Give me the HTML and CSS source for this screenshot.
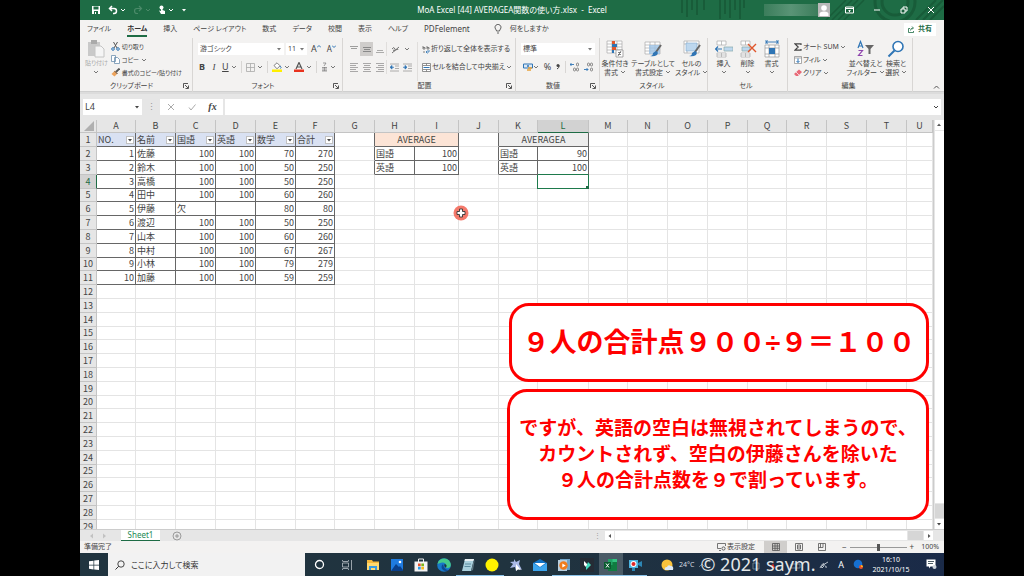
FILE: index.html
```html
<!DOCTYPE html>
<html lang="ja">
<head>
<meta charset="utf-8">
<meta name="viewport" content="width=device-width, initial-scale=1">
<title>MoA Excel [44] AVERAGEA関数の使い方.xlsx - Excel</title>
<link rel="stylesheet" href="styles.css">
</head>
<body>
<svg class="sprite" aria-hidden="true">
  <symbol id="chev" viewBox="0 0 6 6"><path d="M1 2l2 2 2-2" fill="none" stroke="currentColor" stroke-width="1"/></symbol>
  <symbol id="tri" viewBox="0 0 6 6"><path d="M1 2h4L3 4.500z" fill="currentColor"/></symbol>
  <symbol id="launch" viewBox="0 0 6 6"><path d="M.5 5V.5H5M2 2l3 3M5.500 2.500v3h-3" fill="none" stroke="currentColor" stroke-width=".9"/></symbol>
</svg>
<div class="app">
  <header class="titlebar">
    <svg class="deco" viewBox="0 0 264 20" preserveAspectRatio="xMaxYMin slice" aria-hidden="true">
      <g stroke="#185c39" stroke-width="2" fill="none">
        <path d="M2 0v13M7 0v17M12 0v10M17 0v15M24 0v10M40 0v19M45 0v14M50 0v18M55 0v10M60 0v19M64 0v8"/>
        <path d="M146 20l20-20M152 20l20-20M158 20l20-20M164 20l20-20" stroke-width="1.500"/>
        <circle cx="215" cy="2" r="13" stroke-width="3"/><circle cx="215" cy="2" r="20" stroke-width="3"/>
        <path d="M236 20l20-20M243 20l20-20M250 20l14-14"/>
      </g>
    </svg>
    <div class="quick">
      <button aria-label="上書き保存"><svg width="10" height="10" viewBox="0 0 10 10"><path d="M1 1h8v8H1z" fill="#fff"/><path d="M2.500 1.500h5v3h-5zM3 6h4v3H3z" fill="#1e6c45"/><path d="M4 7h1v2H4z" fill="#fff"/></svg></button>
      <button class="undo" aria-label="元に戻す"><svg width="10" height="10" viewBox="0 0 10 10"><path d="M4 1L1.500 3.500 4 6M2 3.500h4a2.500 2.500 0 010 5H5" fill="none" stroke="#fff" stroke-width="1.500"/></svg><svg class="chev"><use href="#chev"/></svg></button>
      <button class="redo" aria-label="やり直し"><svg width="10" height="10" viewBox="0 0 10 10"><path d="M6 1l2.500 2.500L6 6M8 3.500H4a2.500 2.500 0 000 5h1" fill="none" stroke="currentColor" stroke-width="1.200"/></svg><svg class="chev"><use href="#chev"/></svg></button>
      <button aria-label="タッチ/マウス モード"><svg width="8" height="10" viewBox="0 0 8 10"><circle cx="3.500" cy="2.500" r="2" fill="#fff"/><path d="M3 2v4L1 5.500 3 9h4V6L4.500 5V2z" fill="#fff"/></svg><svg class="chev"><use href="#chev"/></svg></button>
      <button aria-label="カスタマイズ"><svg class="chev"><use href="#tri"/></svg></button>
    </div>
    <h1 class="doc">MoA Excel [44] AVERAGEA関数の使い方.xlsx&nbsp; -&nbsp; Excel</h1>
    <div class="right">
      <div class="account"><span class="name"></span><svg width="12" height="14" viewBox="0 0 12 14"><path d="M0 0h12v14H0z" fill="#b9b9b9"/><circle cx="6" cy="5" r="2.800" fill="#fff"/><path d="M1.500 13V11q0-2.500 4.500-2.500T10.500 11v2z" fill="#fff"/></svg></div>
      <div class="winbtns">
        <button aria-label="リボンの表示オプション"><svg width="9" height="8" viewBox="0 0 9 8"><path d="M.5 1h8v6h-8zM.5 2.500h8M4.500 6V4M3.500 5l1-1 1 1" fill="none" stroke="#fff"/></svg></button>
        <button aria-label="最小化"><svg width="8" height="8" viewBox="0 0 8 8"><path d="M1 4h6" stroke="#fff"/></svg></button>
        <button aria-label="元に戻す（縮小）"><svg width="8" height="8" viewBox="0 0 8 8"><path d="M1 3h4v4H1zM3 3V1h4v4H5" fill="none" stroke="#fff"/></svg></button>
        <button aria-label="閉じる"><svg width="8" height="8" viewBox="0 0 8 8"><path d="M1 1l6 6M7 1L1 7" stroke="#fff"/></svg></button>
      </div>
    </div>
  </header>

  <nav class="tabs">
    <button>ファイル</button><button class="on">ホーム</button><button>挿入</button><button>ページ レイアウト</button><button>数式</button><button>データ</button><button>校閲</button><button>表示</button><button>ヘルプ</button><button class="pdf">PDFelement</button>
    <button class="tell"><svg width="8" height="10" viewBox="0 0 8 10"><path d="M2.500 7Q2.500 6 1.500 5a3 3 0 115 0Q5.500 6 5.500 7zM3 9h2" fill="none" stroke="#555" stroke-width=".9"/></svg>何をしますか</button>
    <button class="share"><svg width="7" height="7" viewBox="0 0 7 7"><path d="M2 2.500H.5v4h5V5M2.500 4.500Q2.500 2 5 2M4 .5L5.500 2 4 3.500" fill="none" stroke="#1e6c45" stroke-width=".8"/></svg>共有</button>
  </nav>

  <section class="ribbon">
    <div class="group">
      <div class="body clip">
        <button class="big off"><svg width="18" height="18" viewBox="0 0 18 18"><path d="M1 2h12v14H1z" fill="#c9c9c9"/><path d="M4 0h6v4H4z" fill="#aaa"/><path d="M8 6h6l3 3v8H8z" fill="#f5f5f5" stroke="#c4c4c4"/></svg><span>貼り付け</span><svg class="chev"><use href="#chev"/></svg></button>
        <div class="stack">
          <button><svg width="9" height="9" viewBox="0 0 9 9"><path d="M2.500 0l3.500 6M6.500 0L3 6" stroke="#555"/><circle cx="2" cy="7" r="1.300" fill="none" stroke="#2f75b5"/><circle cx="7" cy="7" r="1.300" fill="none" stroke="#2f75b5"/></svg>切り取り</button>
          <button><svg width="9" height="9" viewBox="0 0 9 9"><path d="M.5.500h4v6h-4zM3.500 2.500h3l2 2v4h-5z" fill="#fff" stroke="#6d8fae" stroke-width=".8"/></svg>コピー <svg class="chev"><use href="#chev"/></svg></button>
          <button><svg width="9" height="9" viewBox="0 0 9 9"><path d="M8.500.5L5 4" stroke="#555" stroke-width="1.800"/><path d="M4 2.500l2.500 3-3 3L.5 6z" fill="#eda35c"/><path d="M3.500 3l3 3" stroke="#555"/></svg>書式のコピー/貼り付け</button>
        </div>
      </div>
      <div class="label"><span>クリップボード</span><svg class="launch"><use href="#launch"/></svg></div>
    </div>

    <div class="group">
      <div class="body rows">
        <div class="row">
          <label class="combo font"><select aria-label="フォント"><option>游ゴシック</option></select><svg class="chev"><use href="#tri"/></svg></label>
          <label class="combo size"><select aria-label="フォント サイズ"><option>11</option></select><svg class="chev"><use href="#tri"/></svg></label>
          <button class="aa" aria-label="フォント サイズの拡大">A<svg width="4" height="8" viewBox="0 0 4 8"><path d="M0 2.500L2 .5l2 2" fill="none" stroke="#2f75b5"/></svg></button>
          <button class="aa small" aria-label="フォント サイズの縮小">A<svg width="4" height="8" viewBox="0 0 4 8"><path d="M0 .5l2 2 2-2" fill="none" stroke="#2f75b5"/></svg></button>
        </div>
        <div class="row fmt">
          <button class="b">B</button><button class="i">I</button><button class="u"><u>U</u><svg class="chev"><use href="#chev"/></svg></button>
          <i class="sep"></i>
          <button aria-label="罫線"><svg width="9" height="9" viewBox="0 0 9 9"><path d="M.5.500h8v8h-8zM4.500.500v8M.5 4.500h8" fill="none" stroke="#aaa" stroke-width=".8"/></svg><svg class="chev"><use href="#chev"/></svg></button>
          <i class="sep"></i>
          <button aria-label="塗りつぶしの色"><svg width="10" height="10" viewBox="0 0 10 10"><path d="M2 3.500L5 .8l3 3-3 3z" fill="#fff" stroke="#666" stroke-width=".8"/><path d="M8 4q2 2 .5 2.500" fill="none" stroke="#2f75b5"/><path d="M0 7.500h10V10H0z" fill="#ffef00"/></svg><svg class="chev"><use href="#chev"/></svg></button>
          <button aria-label="フォントの色"><svg width="10" height="10" viewBox="0 0 10 10"><path d="M2 7l3-6.500L8 7M3.200 5h3.600" fill="none" stroke="#555" stroke-width="1.200"/><path d="M0 7.500h10V10H0z" fill="#e8321e"/></svg><svg class="chev"><use href="#chev"/></svg></button>
          <i class="sep"></i>
          <button aria-label="ふりがな"><svg width="7" height="10" viewBox="0 0 7 10"><path d="M2 1h3L3 4M1 5.500h5M1 9h5M2 6v3M5 6v3M3.500 5v4" fill="none" stroke="#777" stroke-width=".7"/></svg><svg class="chev"><use href="#chev"/></svg></button>
        </div>
      </div>
      <div class="label"><span>フォント</span><svg class="launch"><use href="#launch"/></svg></div>
    </div>

    <div class="group">
      <div class="body align">
        <div class="alignbtns">
          <button aria-label="上揃え"><svg width="8" height="9" viewBox="0 0 8 9"><path d="M0 1.500h8M1 3.500h6" stroke="#888" stroke-width=".8"/></svg></button>
          <button class="pressed" aria-label="上下中央揃え"><svg width="8" height="9" viewBox="0 0 8 9"><path d="M0 2.500h8M1 4.500h6M0 6.500h8" stroke="#777" stroke-width=".8"/></svg></button>
          <button aria-label="下揃え"><svg width="8" height="9" viewBox="0 0 8 9"><path d="M1 5.500h6M0 7.500h8" stroke="#999" stroke-width=".8"/></svg></button>
          <button class="line wide" aria-label="方向"><svg width="9" height="9" viewBox="0 0 9 9"><path d="M1 8l7-6M1 4q2-3 3 0t-2 1M5 5q2-2 2 0" fill="none" stroke="#666" stroke-width=".9"/></svg><svg class="chev"><use href="#chev"/></svg></button>
          <button aria-label="左揃え"><svg width="8" height="9" viewBox="0 0 8 9"><path d="M0 .5h8M0 2.500h6M0 4.500h8M0 6.500h6M0 8.500h8" stroke="#888" stroke-width=".7"/></svg></button>
          <button aria-label="中央揃え"><svg width="8" height="9" viewBox="0 0 8 9"><path d="M0 .5h8M1 2.500h6M0 4.500h8M1 6.500h6M0 8.500h8" stroke="#888" stroke-width=".7"/></svg></button>
          <button aria-label="右揃え"><svg width="8" height="9" viewBox="0 0 8 9"><path d="M0 .5h8M2 2.500h6M0 4.500h8M2 6.500h6M0 8.500h8" stroke="#888" stroke-width=".7"/></svg></button>
          <button class="line wide" aria-label="インデント"><svg width="9" height="9" viewBox="0 0 9 9"><path d="M0 1h9M5 3h4M5 5.500h4M0 8h9" stroke="#999" stroke-width=".8"/><path d="M0 4.300L2 2.500v3.600zM2 4.300h2" fill="#2f75b5" stroke="#2f75b5" stroke-width=".8"/></svg><svg width="9" height="9" viewBox="0 0 9 9"><path d="M0 1h9M5 3h4M5 5.500h4M0 8h9" stroke="#999" stroke-width=".8"/><path d="M4 4.300L2 2.500v3.600zM2 4.300H0" fill="#2f75b5" stroke="#2f75b5" stroke-width=".8"/></svg></button>
        </div>
        <div class="wrapbtns">
          <button><svg width="8" height="9" viewBox="0 0 8 9"><path d="M1 1v3h2V2.500H1M5 1v3h2V2.500H5M1 7h2" fill="none" stroke="#666" stroke-width=".8"/><path d="M7 5v2H4M5.500 5.500L4 7l1.500 1.500" fill="none" stroke="#2f75b5" stroke-width=".8"/></svg>折り返して全体を表示する</button>
          <button><svg width="9" height="9" viewBox="0 0 9 9"><path d="M.5 2.500v-2h8v2M.5 6.500v2h8v-2M4.500.500v2M4.500 6.500v2M.5 2.500h8v4h-8z" fill="#fff" stroke="#777" stroke-width=".8"/><path d="M1.500 4.500h6" stroke="#2f75b5"/></svg>セルを結合して中央揃え <svg class="chev"><use href="#chev"/></svg></button>
        </div>
      </div>
      <div class="label"><span>配置</span><svg class="launch"><use href="#launch"/></svg></div>
    </div>

    <div class="group">
      <div class="body rows">
        <div class="row"><label class="combo num"><select aria-label="表示形式"><option>標準</option></select><svg class="chev"><use href="#tri"/></svg></label></div>
        <div class="row numfmt">
          <button aria-label="通貨表示形式"><svg width="10" height="9" viewBox="0 0 10 9"><path d="M.5 1h9v4h-9z" fill="#dbe8f5" stroke="#2f75b5"/><circle cx="5" cy="3" r="1" fill="#2f75b5"/><path d="M5 5h4M4 7h4" stroke="#e8a33d" stroke-width="1.500"/></svg><svg class="chev"><use href="#chev"/></svg></button>
          <button class="pct">%</button><button aria-label="桁区切りスタイル"><svg width="4" height="8" viewBox="0 0 4 8"><circle cx="2" cy="2.500" r="1.500" fill="#444"/><path d="M3.200 2.500Q3.200 5 1 6" fill="none" stroke="#444"/></svg></button>
          <i class="sep"></i>
          <button aria-label="小数点以下の表示桁数を増やす"><svg width="9" height="10" viewBox="0 0 9 10"><path d="M0 2.500h4M1.500 1L0 2.500 1.500 4" fill="none" stroke="#2f75b5" stroke-width=".9"/><rect x="6.500" y="1" width="2" height="3" rx="1" fill="none" stroke="#666" stroke-width=".7"/><rect x="3.500" y="6" width="2" height="3" rx="1" fill="none" stroke="#666" stroke-width=".7"/><rect x="6.500" y="6" width="2" height="3" rx="1" fill="none" stroke="#666" stroke-width=".7"/></svg></button>
          <button aria-label="小数点以下の表示桁数を減らす"><svg width="9" height="10" viewBox="0 0 9 10"><path d="M0 7.500h4M2.500 6L4 7.500 2.500 9" fill="none" stroke="#2f75b5" stroke-width=".9"/><rect x="3.500" y="1" width="2" height="3" rx="1" fill="none" stroke="#666" stroke-width=".7"/><rect x="6.500" y="1" width="2" height="3" rx="1" fill="none" stroke="#666" stroke-width=".7"/><rect x="6.500" y="6" width="2" height="3" rx="1" fill="none" stroke="#666" stroke-width=".7"/></svg></button>
        </div>
      </div>
      <div class="label"><span>数値</span><svg class="launch"><use href="#launch"/></svg></div>
    </div>

    <div class="group">
      <div class="body bigs">
        <button class="big"><svg width="18" height="18" viewBox="0 0 18 18"><path d="M1 1h15v12H1zM1 4h15M1 7h15M1 10h15M6 1v12M11 1v12" fill="#fff" stroke="#aaa" stroke-width=".7"/><path d="M6 1h3v3H6zM6 7h4v3H6z" fill="#e0562b"/><path d="M6 4h5v3H6zM6 10h2v3H6z" fill="#2f75b5"/><path d="M10 10h7v7h-7z" fill="#fff" stroke="#888" stroke-width=".7"/><path d="M12 12.500h3M12 14.500h3M15 11l-3 5" stroke="#555" stroke-width=".7"/></svg><span>条件付き<br>書式 <svg class="chev"><use href="#chev"/></svg></span></button>
        <button class="big"><svg width="18" height="18" viewBox="0 0 18 18"><path d="M1 2h15v12H1zM1 5h15M1 8h15M1 11h15M6 2v12M11 2v12" fill="#fff" stroke="#aaa" stroke-width=".7"/><path d="M5 5h11v9H5z" fill="#9dc3e6" opacity=".8"/><path d="M17 5l-5 7" stroke="#666" stroke-width="2"/><path d="M12 11q3 1 1 4-3 2-7 1 3 0 3-3z" fill="#2f75b5"/></svg><span>テーブルとして<br>書式設定 <svg class="chev"><use href="#chev"/></svg></span></button>
        <button class="big"><svg width="18" height="18" viewBox="0 0 18 18"><path d="M1 1h15v12H1zM1 4h15M4 1v12" fill="#fff" stroke="#aaa" stroke-width=".7"/><path d="M3 3h11v8H3z" fill="#bdd7ee" stroke="#7fa8cf" stroke-width=".6"/><path d="M17 5l-5 7" stroke="#666" stroke-width="2"/><path d="M12 11q3 1 1 4-3 2-7 1 3 0 3-3z" fill="#2f75b5"/></svg><span>セルの<br>スタイル <svg class="chev"><use href="#chev"/></svg></span></button>
      </div>
      <div class="label"><span>スタイル</span></div>
    </div>

    <div class="group">
      <div class="body bigs cells">
        <button class="big"><svg width="18" height="18" viewBox="0 0 18 18"><path d="M2 1h9v4H2zM2 13h9v4H2zM6.500 1v4M6.500 13v4M2 15h9" fill="#fff" stroke="#aaa" stroke-width=".7"/><path d="M9 7h9v4H9z" fill="#bdd7ee" stroke="#8aa" stroke-width=".7"/><path d="M0 9h7M3 6.500L.5 9 3 11.500" fill="none" stroke="#2f75b5" stroke-width="1.200"/></svg><span>挿入<br><svg class="chev"><use href="#chev"/></svg></span></button>
        <button class="big"><svg width="18" height="18" viewBox="0 0 18 18"><path d="M2 1h9v4H2zM2 13h9v4H2zM6.500 1v4M6.500 13v4M2 15h9" fill="#fff" stroke="#aaa" stroke-width=".7"/><path d="M3 7h8v4H3z" fill="#bdd7ee" stroke="#8aa" stroke-width=".7"/><path d="M9 4l8 8M17 4l-8 8" stroke="#e0562b" stroke-width="1.400"/></svg><span>削除<br><svg class="chev"><use href="#chev"/></svg></span></button>
        <button class="big"><svg width="18" height="18" viewBox="0 0 18 18"><path d="M2 5h14v12H2zM2 8h14M2 14h14M6 5v12M12 5v12" fill="#fff" stroke="#999" stroke-width=".7"/><path d="M6 8h6v6H6z" fill="#2f75b5"/><path d="M3 2h12M3 0v4M15 0v4M5 .5L3 2l2 1.500M13 .5L15 2l-2 1.500" fill="none" stroke="#2f75b5" stroke-width=".9"/></svg><span>書式<br><svg class="chev"><use href="#chev"/></svg></span></button>
      </div>
      <div class="label"><span>セル</span></div>
    </div>

    <div class="group">
      <div class="body edit">
        <div class="stack">
          <button><svg width="8" height="8" viewBox="0 0 8 8"><path d="M7 2V.8H1L4.200 4 1 7.200h6V6" fill="none" stroke="#444" stroke-width="1.200"/></svg>オート SUM <svg class="chev"><use href="#chev"/></svg></button>
          <button><svg width="8" height="8" viewBox="0 0 8 8"><path d="M.5.500h7v7h-7zM.5 2h7" fill="#fff" stroke="#888" stroke-width=".7"/><path d="M4 2.500v4M2.500 5L4 6.500 5.500 5" fill="none" stroke="#2f75b5"/></svg>フィル <svg class="chev"><use href="#chev"/></svg></button>
          <button><svg width="8" height="8" viewBox="0 0 8 8"><path d="M5 .5L8 3 4 7H2L0 5z" fill="#e86a78"/><path d="M2 3l3 3" stroke="#fff" stroke-width=".7"/></svg>クリア <svg class="chev"><use href="#chev"/></svg></button>
        </div>
        <button class="big"><svg width="18" height="18" viewBox="0 0 18 18"><path d="M1 8l2.500-6.500L6 8M2 6h3" fill="none" stroke="#2f75b5" stroke-width="1.200"/><path d="M1.500 10.500h4l-4 5h4" fill="none" stroke="#8e44ad" stroke-width="1.200"/><path d="M8 5h9l-3.500 4v5h-2V9z" fill="#666"/></svg><span>並べ替えと<br>フィルター <svg class="chev"><use href="#chev"/></svg></span></button>
        <button class="big"><svg width="18" height="18" viewBox="0 0 18 18"><circle cx="11" cy="6.500" r="5" fill="#fff" stroke="#2f75b5" stroke-width="1.600"/><path d="M7.500 10.500L1.500 16.500" stroke="#2f75b5" stroke-width="2"/></svg><span>検索と<br>選択 <svg class="chev"><use href="#chev"/></svg></span></button>
      </div>
      <div class="label"><span>編集</span></div>
    </div>
    <button class="collapse" aria-label="リボンを折りたたむ"><svg width="7" height="6" viewBox="0 0 7 6"><path d="M1 4.500L3.500 2 6 4.500" fill="none" stroke="#555"/></svg></button>
  </section>

  <section class="formula">
    <label class="combo namebox"><input aria-label="名前ボックス" value="L4"><svg class="chev"><use href="#tri"/></svg></label>
    <span class="grip">⋮</span>
    <div class="fx">
      <button aria-label="キャンセル"><svg width="8" height="8" viewBox="0 0 8 8"><path d="M1 1l6 6M7 1L1 7" stroke="#aaa"/></svg></button>
      <button aria-label="入力"><svg width="8" height="8" viewBox="0 0 8 8"><path d="M1 4.500L3 7l4.500-5.500" fill="none" stroke="#aaa"/></svg></button>
      <button class="f" aria-label="関数の挿入">fx</button>
    </div>
    <label class="combo bar"><input aria-label="数式バー" value=""><svg class="chev"><use href="#chev"/></svg></label>
  </section>

  <main class="work">
    <div class="sheet"><table id="grid"></table></div>
    <div class="vscroll">
      <button aria-label="上へ"><svg width="6" height="6" viewBox="0 0 6 6"><path d="M1 4h4L3 1.500z" fill="#555"/></svg></button>
      <span class="thumb"></span><span class="rest"></span>
      <button aria-label="下へ"><svg class="chev"><use href="#tri"/></svg></button>
    </div>
    <svg class="cursor" width="16" height="16" viewBox="0 0 16 16"><circle cx="8" cy="8" r="7.500" fill="#f4796b"/><path d="M6.500 4h3v2.500H12v3H9.500V12h-3V9.500H4v-3h2.500z" fill="#fff" stroke="#333" stroke-width=".9"/></svg>
    <div class="notes">
      <p class="note first">９人の合計点９００<span class="div">÷</span>９＝１００</p>
      <p class="note second">ですが、英語の空白は無視されてしまうので、<br>カウントされず、空白の伊藤さんを除いた<br>９人の合計点数を９で割っています。</p>
    </div>
  </main>

  <div class="sheetbar">
    <span class="arrows"><svg width="20" height="6" viewBox="0 0 20 6"><path d="M5 .5v5L2 3zM15 .5v5L18 3z" fill="#c2c2c2"/></svg></span>
    <button class="sheettab">Sheet1</button>
    <button class="add" aria-label="新しいシート"><svg width="10" height="10" viewBox="0 0 10 10"><circle cx="5" cy="5" r="4" fill="none" stroke="#888" stroke-width=".8"/><path d="M5 3v4M3 5h4" stroke="#888" stroke-width=".8"/></svg></button>
    <div class="hscroll"><span class="grip">⋮</span>
      <button aria-label="左へ"><svg width="6" height="6" viewBox="0 0 6 6"><path d="M4 1v4L1.500 3z" fill="#555"/></svg></button><span class="thumb"></span><span class="rest"></span>
      <button aria-label="右へ"><svg width="6" height="6" viewBox="0 0 6 6"><path d="M2 1v4l2.500-2z" fill="#555"/></svg></button></div>
  </div>

  <div class="status">
    <span>準備完了</span>
    <button class="disp"><svg width="9" height="8" viewBox="0 0 9 8"><path d="M4 5.500H.5v-5h8V3M2 7.500h2" fill="none" stroke="#555" stroke-width=".8"/><circle cx="6.500" cy="5.500" r="1.600" fill="none" stroke="#555" stroke-width=".9"/></svg>表示設定</button>
    <div class="views">
      <button class="cur" aria-label="標準"><svg width="8" height="8" viewBox="0 0 8 8"><path d="M.5.500h7v7h-7zM.5 3h7M.5 5.300h7M3 .5v7M5.300.5v7" fill="none" stroke="#555" stroke-width=".8"/></svg></button>
      <button aria-label="ページ レイアウト"><svg width="8" height="8" viewBox="0 0 8 8"><path d="M.5.500h7v7h-7zM2.500 2h3v4h-3zM2.500 4h3" fill="none" stroke="#555" stroke-width=".8"/></svg></button>
      <button aria-label="改ページ プレビュー"><svg width="8" height="8" viewBox="0 0 8 8"><path d="M.5.500h7v7h-7zM2.500.500v4M5 .5v4H.5" fill="none" stroke="#555" stroke-width=".8"/></svg></button>
    </div>
    <div class="zoom"><span>−</span><input type="range" aria-label="ズーム" min="0" max="100" value="50"><span>+</span></div>
    <span>100%</span>
  </div>

  <footer class="taskbar">
    <button class="start" aria-label="スタート"><svg width="10" height="10" viewBox="0 0 10 10"><path d="M0 1.300l4.500-.6v4H0zM5.200.6L10 0v4.700H5.200zM0 5.400h4.500v4L0 8.700zM5.200 5.400H10V10l-4.800-.6z" fill="#fff"/></svg></button>
    <label class="search"><svg width="10" height="10" viewBox="0 0 10 10"><circle cx="6" cy="4" r="3.200" fill="none" stroke="#333" stroke-width=".9"/><path d="M3.700 6.300L.5 9.500" stroke="#333"/></svg><input aria-label="検索" placeholder="ここに入力して検索"></label>
    <div class="sys">
      <button aria-label="Cortana"><svg width="11" height="11" viewBox="0 0 11 11"><circle cx="5.500" cy="5.500" r="4" fill="none" stroke="#fff" stroke-width="1.300"/></svg></button>
      <button aria-label="タスク ビュー"><svg width="11" height="10" viewBox="0 0 11 10"><path d="M.5 1V0M6.500 1V0M.5 9v1M6.500 9v1M.5 3h6v4h-6zM.5 1.500h6M.5 8.500h6M9.500 0v10" fill="none" stroke="#b8c0c5" stroke-width=".8"/></svg></button>
    </div>
    <div class="apps">
      <button aria-label="エクスプローラー"><svg width="14" height="12" viewBox="0 0 14 12"><path d="M1 1h5l1 1.500h6V11H1z" fill="#f5b83d"/><path d="M1 4h12v7H1z" fill="#ffd970"/><path d="M3 11V7h8v4H9V9H5v2z" fill="#3a9ae0"/></svg></button>
      <button aria-label="フォト"><svg width="14" height="12" viewBox="0 0 14 12"><path d="M1 0h12v12H1z" fill="#1f7be0"/><path d="M1 12l5-7 3 3 1-1 3 4v1z" fill="#0a3f8a"/><circle cx="10" cy="3" r="1.300" fill="#fff"/></svg></button>
      <button aria-label="Microsoft Store"><svg width="14" height="14" viewBox="0 0 14 14"><path d="M4.500 4V1h5v3" fill="none" stroke="#eee"/><path d="M.5 3.500h13v10H.5z" fill="#f3f3f3"/><path d="M4 5.500h2.700v2.700H4z" fill="#e8502a"/><path d="M7.300 5.500H10v2.700H7.300z" fill="#7cb518"/><path d="M4 8.800h2.700v2.700H4z" fill="#2a9ce8"/><path d="M7.300 8.800H10v2.700H7.300z" fill="#f8b81c"/></svg></button>
      <button aria-label="Edge"><svg width="14" height="14" viewBox="0 0 14 14"><circle cx="7" cy="7" r="6.800" fill="#1879c9"/><path d="M.5 6A6.700 6.700 0 0113.800 7q0 3-3.500 3-2.300-.3-1-2.500Q8.500 4 5 4.500 2 5 .5 6z" fill="#45c98b"/><path d="M6 6q-3 3 0 6 3 2 6 0Q7 12 6 6z" fill="#0d4a94"/><path d="M7 6.500q2-1 2.500 1T8 9.500z" fill="#20333f"/></svg></button>
      <button class="run" aria-label="メモ帳"><svg width="14" height="14" viewBox="0 0 14 14"><path d="M4 1h9l-3 12H1z" fill="#a9cfdc"/><path d="M4 1h9l-.6 2H3.500z" fill="#e8eff2"/><path d="M4 6h6M3.500 8.500h6" stroke="#5d8c9f"/><path d="M13 2l-3 11 2-1 1.500-9z" fill="#5d7783"/></svg></button>
      <button class="run" aria-label="録画"><svg width="14" height="14" viewBox="0 0 14 14"><circle cx="7" cy="7" r="6.500" fill="#fff200"/></svg></button>
      <button aria-label="ペイント"><svg width="14" height="14" viewBox="0 0 14 14"><path d="M5 1l2 3 4-2-1 4 3 6-4-2-2 3-1-4-5 1 3-4-3-2 4-.5z" fill="#a9b8e6"/><path d="M7 6l5 6-3-.5L7 13z" fill="#fff"/></svg></button>
      <button aria-label="メール"><svg width="14" height="12" viewBox="0 0 14 12"><path d="M0 4l7-4 7 4v8H0z" fill="#1272c4"/><path d="M1.500 4h11L7 8z" fill="#fff"/><path d="M0 4l7 4.500L14 4v8H0z" fill="#3ca5ee"/></svg></button>
      <button class="run" aria-label="メディア プレーヤー"><svg width="14" height="14" viewBox="0 0 14 14"><path d="M3 1h10v11H3z" fill="#6fa3c7"/><path d="M1 2h9v11H1z" fill="#b8cede"/><circle cx="6.500" cy="7.500" r="4.200" fill="#f07c1c"/><path d="M5.300 5.500v4l3.400-2z" fill="#fff"/></svg></button>
      <button class="run" aria-label="Filmora"><svg width="14" height="14" viewBox="0 0 14 14"><path d="M0 0h14v14H0z" fill="#252c35"/><path d="M4 3l4 4-2 2-2-2z" fill="#fff"/><path d="M8 4l3 3-5 5V9z" fill="#45dcc0"/></svg></button>
      <button class="run now" aria-label="Excel"><svg width="14" height="14" viewBox="0 0 14 14"><path d="M4 1h9v12H4z" fill="#21a366"/><path d="M8.500 4H13v9H4V7h4.500z" fill="#107c41"/><path d="M8.500 1H13v3H8.500z" fill="#33c481"/><path d="M0 4h7v7H0z" fill="#0b5c30"/><path d="M2 5.500l3 4M5 5.500l-3 4" stroke="#fff"/></svg></button>
      <button class="run" aria-label="画面録画"><svg width="14" height="14" viewBox="0 0 14 14"><path d="M1 2h9v8H1z" fill="#4bb4e0"/><path d="M10 5l4-2v6l-4-2zM4 10h3v3H4z" fill="#2d86b5"/><circle cx="5.500" cy="6" r="3" fill="#fff"/><circle cx="5.500" cy="6" r="2" fill="#e02828"/></svg></button>
    </div>
    <div class="weather"><svg width="13" height="12" viewBox="0 0 13 12"><circle cx="6" cy="6" r="5.500" fill="#f9c23c"/><path d="M4 11q-1-3 2-3 1-3 4-1 3 0 2 4z" fill="#dce9f5"/></svg><span>24°C</span></div>
    <div class="tray">
      <svg width="110" height="12" viewBox="0 0 110 12"><g fill="none" stroke="#7c8f9d" stroke-width=".8"><path d="M2 8l3-3 3 3M56 4h6v6h-6zM94 9h9V5h-9z"/></g><path d="M76 4l2 5h-4z" fill="#e02828"/></svg>
      <span class="mark">© 2021 saym.</span>
    </div>
    <div class="ime">
      <svg width="10" height="10" viewBox="0 0 10 10"><path d="M1 8q3-6 4-4T3 8Q1 7 4 5l5-3M6 6q2 0 1 2" fill="none" stroke="#dfe5ea" stroke-width=".8"/></svg>
      <span>A</span>
      <svg width="11" height="11" viewBox="0 0 11 11"><circle cx="5" cy="5" r="4.300" fill="#1670d2"/><circle cx="8" cy="8" r="2" fill="#e8502a"/><path d="M8 6a2 2 0 012 2H8z" fill="#f8b81c"/></svg>
    </div>
    <div class="clock"><span>16:10</span><span>2021/10/15</span></div>
    <button class="notify" aria-label="通知"><svg width="11" height="11" viewBox="0 0 11 11"><path d="M.5.500h9v7h-5L3 9.500v-2H.5z" fill="#fff"/><path d="M2 2.500h6M2 4.500h5" stroke="#20333f" stroke-width=".8"/><circle cx="8.500" cy="8" r="2" fill="#ccd3d9"/></svg></button>
  </footer>
</div>
<script src="sheet.js"></script>
</body>
</html>
```
FILE: styles.css
```css
* { box-sizing: border-box; }
body {
  margin: 0;
  padding: 0 80px;
  background: #000;
  color: #444;
  font-family: "Noto Sans", "Noto Sans CJK JP", sans-serif;
  font-size: 7px;
  line-height: 10px;
  font-feature-settings: "palt";
}
button, input, select {
  font: inherit;
  color: inherit;
  font-feature-settings: inherit;
  background: none;
  border: 0;
  padding: 0;
  margin: 0;
  white-space: nowrap;
}
button { display: flex; align-items: center; justify-content: center; }
svg { display: block; flex: none; }
.sprite { position: absolute; width: 0; height: 0; }
.chev, .launch { width: 6px; height: 6px; }
.app { height: 100vh; display: flex; flex-direction: column; background: #e6e6e6; overflow: hidden; }

/* title bar */
.titlebar {
  position: relative;
  flex: none;
  height: 20px;
  display: grid;
  grid-template-columns: 1fr auto 1fr;
  align-items: center;
  background: #1e6c45;
  color: #fff;
}
.deco { position: absolute; right: 0; top: 0; width: 264px; height: 20px; }
.quick { display: flex; align-items: center; gap: 7px; padding-left: 11px; }
.quick button { gap: 2px; }
.redo { color: #4b8a69; }
.doc { margin: 0; font-size: 8px; font-weight: 400; white-space: nowrap; }
.right { position: relative; display: flex; justify-content: flex-end; }
.account { display: flex; align-items: center; padding-right: 6px; }
.name { width: 54px; height: 12px; background: linear-gradient(90deg, #3b7d5b, #5a9476 50%, #3b7d5b); }
.winbtns { display: flex; }
.winbtns button { width: 27px; height: 20px; }

/* tabs */
.tabs {
  flex: none;
  height: 18px;
  display: flex;
  align-items: center;
  gap: 16px;
  padding: 0 8px 0 7px;
  background: #f3f2f1;
}
.tabs button { height: 16px; border-bottom: 2px solid transparent; border-top: 2px solid transparent; }
.tabs .on { border-bottom-color: #1e6c45; font-weight: 700; color: #333; }
.tabs .pdf { font-size: 8px; }
.tabs .tell { gap: 8px; padding-left: 8px; }
.tabs .share { margin-left: auto; height: 13px; padding: 0 4px; gap: 3px; background: #fff; border: 0; color: #1e6c45; font-weight: 700; }

/* ribbon */
.ribbon {
  flex: none;
  height: 54px;
  display: grid;
  grid-template-columns: 113px 150px 173px 84px 108px 80px 125px 1fr;
  background: #f3f2f1;
  border-bottom: 1px solid #cfcfcf;
}
.ribbon .chev { color: #777; }
.group { display: flex; flex-direction: column; min-width: 0; border-right: 1px solid #d8d6d4; }
.body { flex: 1; display: flex; padding-top: 2px; min-width: 0; }
.label { display: flex; height: 11px; align-items: center; padding: 0 3px 1px 0; }
.label span { flex: 1; text-align: center; }
.big { flex-direction: column; justify-content: flex-start; gap: 1px; line-height: 9px; }
.big span { text-align: center; }
.big span .chev, .stack .chev { display: inline-block; }
.big.off { color: #aaa; }
.stack { display: flex; flex-direction: column; justify-content: space-between; align-items: flex-start; padding-bottom: 2px; }
.stack button { gap: 2px; height: 13px; }
.clip { padding-left: 5px; gap: 3px; font-size: 6px; }
.rows { flex-direction: column; padding: 4px 4px 0 5px; gap: 4px; }
.row { display: flex; align-items: center; height: 14px; gap: 2px; }
.combo { display: flex; align-items: center; height: 12px; background: #fff; padding: 0 2px; }
.combo select, .combo input { flex: 1; min-width: 0; width: 0; appearance: none; outline: 0; }
.font { width: 90px; }
.size { width: 22px; }
.num { width: 75px; }
.aa { font-size: 9px; width: 14px; }
.aa.small { font-size: 8px; }
.fmt { justify-content: space-between; font-size: 9px; padding-right: 2px; }
.fmt button { gap: 2px; min-width: 8px; }
.b { font-weight: 700; }
.i { font-style: italic; font-family: "Liberation Serif", serif; }
.sep { width: 1px; height: 12px; background: #d8d6d4; }
.align { padding: 4px 0 0 4px; gap: 3px; }
.alignbtns { display: grid; grid-template-columns: 13px 13px 13px 28px; grid-auto-rows: 14px; row-gap: 4px; }
.pressed { background: #cfcdcb; }
.wide { gap: 4px; border-left: 1px solid #e0dedc; }
.wrapbtns { display: flex; flex-direction: column; gap: 4px; align-items: flex-start; border-left: 1px solid #e0dedc; padding-left: 4px; }
.wrapbtns button { height: 14px; gap: 1px; }
.numfmt { justify-content: space-between; padding: 0 2px; }
.pct { font-size: 9px; }
.bigs { display: grid; grid-template-columns: 30px 46px 31px; justify-content: center; }
.cells { grid-template-columns: 24px 24px 24px; }
.edit { padding-left: 6px; justify-content: space-between; padding-right: 5px; }
.edit .stack button { gap: 1px; }
.collapse { align-self: end; justify-self: end; width: 16px; height: 10px; }

/* formula bar */
.formula { flex: none; height: 28px; display: flex; align-items: center; padding: 0 3px 0 3px; font-size: 9px; border-top: 2px solid #dcdcdc; }
.formula .combo { height: 16px; }
.namebox { width: 59px; }
.grip { width: 18px; text-align: center; color: #999; }
.fx { display: flex; width: 63px; height: 16px; background: #fff; margin-right: 2px; }
.fx button { flex: 1; }
.fx .f { font-family: "Liberation Serif", serif; font-style: italic; font-weight: 700; font-size: 10px; }
.bar { flex: 1; }

/* sheet */
.work { position: relative; flex: 1; min-height: 0; display: flex; }
.sheet { flex: 1; min-width: 0; overflow: hidden; background: #fff; }
#grid { width: 100%; table-layout: fixed; border-spacing: 0; border-collapse: separate; font-family: "Noto Sans CJK JP", sans-serif; font-size: 9px; line-height: 12px; font-feature-settings: normal; }
#grid tr { height: 14px; }
#grid tr:nth-child(5n) { height: 13px; }
#grid thead tr { height: 13px; }
#grid th, #grid td { padding: 0 1px; border: 0 solid #e4e4e4; border-width: 0 1px 1px 0; white-space: nowrap; overflow: hidden; font-weight: 400; text-align: left; }
#grid th { background: #e6e6e6; border-color: #c4c4c4; text-align: center; padding: 0; }
#grid th.sel { background: #d2d2d2; color: #1e6c45; border-bottom-color: #1e6c45; }
#grid tbody th.sel { border-bottom-color: #c4c4c4; border-right-color: #1e6c45; }
#grid td.num { text-align: right; }
#grid td.box { border-color: #666; }
#grid td.edge { border-right-color: #666; }
#grid td.head { background: #d9e1f2; }
#grid td.avg { background: #fce4d6; text-align: center; }
#grid td.avga { background: #ededed; text-align: center; }
#grid td.active { position: relative; overflow: visible; border-color: #1e7a4c; box-shadow: -1px 0 #1e7a4c; }
#grid td.under { border-bottom-color: #1e7a4c; }
#grid td.active::after { content: ""; position: absolute; right: -1px; bottom: -1px; width: 3px; height: 3px; background: #1e6c45; }
.cell { display: flex; justify-content: space-between; align-items: center; height: 12px; }
.cell button { width: 8px; height: 8px; background: #fff; border: 1px solid #c0c0c0; }
.corner { width: 0; height: 0; margin: 0 2px 0 auto; border-left: 10px solid transparent; border-bottom: 10px solid #b0b0b0; }
.vscroll { width: 11px; display: flex; flex-direction: column; align-items: center; gap: 1px; border-left: 1px solid #ccc; }
.vscroll button { width: 9px; height: 10px; background: #fff; }
.vscroll span { width: 9px; }
.vscroll .thumb { flex: 1; background: #fff; }
.vscroll .rest { height: 14px; background: #d6d6d6; }
.cursor { position: absolute; left: 373px; top: 85px; }
.notes { position: absolute; right: 15px; bottom: 9px; display: flex; flex-direction: column; align-items: flex-end; gap: 7px; color: #f00; font-family: "Noto Sans CJK JP", sans-serif; font-weight: 700; font-feature-settings: normal; }
.note { margin: 0; background: #fff; border: 3px solid #f00; border-radius: 20px; text-align: center; white-space: nowrap; }
.first { width: 420px; padding: 19px 0 20px; font-size: 27px; line-height: 32px; }
.div { font-family: "Liberation Sans", sans-serif; }
.second { width: 422px; padding: 22px 0 25px; font-size: 19px; line-height: 26px; }

/* sheet tabs */
.sheetbar { flex: none; height: 12px; display: flex; align-items: center; border-top: 1px solid #ccc; }
.arrows { width: 41px; padding-left: 8px; }
.sheettab { align-self: stretch; width: 39px; background: #fff; border-bottom: 1px solid #1e6c45; color: #1e8a55; font-size: 8px; }
.add { margin-left: 12px; }
.hscroll { margin-left: auto; width: 354px; height: 10px; display: flex; align-items: center; gap: 1px; padding-right: 11px; }
.hscroll .grip { width: 14px; }
.hscroll button { width: 9px; height: 9px; background: #fff; }
.hscroll .thumb { flex: 1; height: 9px; background: #fff; }
.hscroll .rest { width: 15px; height: 9px; background: #d6d6d6; }

/* status bar */
.status { flex: none; height: 12px; display: flex; align-items: center; padding: 0 5px 0 4px; background: #f3f2f1; }
.disp { margin-left: auto; gap: 1px; }
.views { display: flex; margin: 0 9px 0 9px; }
.views button { width: 23px; height: 12px; }
.views .cur { background: #d0cecc; }
.zoom { display: flex; align-items: center; gap: 3px; margin-right: 7px; font-size: 8px; }
.zoom input { appearance: none; width: 57px; height: 8px; background: linear-gradient(#999, #999) center / 100% 1px no-repeat; }
.zoom input::-webkit-slider-thumb { appearance: none; width: 3px; height: 7px; background: #555; }

/* taskbar */
.taskbar { flex: none; height: 23px; display: flex; align-items: stretch; background: linear-gradient(90deg, #20343f, #20333f 55%, #1a2a48); color: #fff; }
.start { width: 28px; }
.search { width: 197px; display: flex; align-items: center; gap: 6px; padding-left: 7px; background: #f2f2f2; color: #333; font-size: 8px; }
.search input { flex: 1; min-width: 0; outline: 0; }
.search input::placeholder { color: #333; opacity: 1; }
.sys { display: flex; width: 56px; }
.sys button { flex: 1; }
.apps { display: flex; width: 286px; }
.apps button { flex: 1; }
.run { border-bottom: 1px solid #8cc4ea; border-top: 1px solid transparent; }
.now { background: #4a5b66; }
.weather { display: flex; align-items: center; gap: 5px; padding-left: 14px; font-size: 7px; color: #d5dbe0; }
.tray { position: relative; flex: 1; display: flex; align-items: center; padding-left: 3px; min-width: 0; }
.mark { position: absolute; left: 6px; top: 0; font-size: 18px; line-height: 23px; color: #e4e8ea; white-space: nowrap; }
.ime { display: flex; align-items: center; gap: 9px; font-size: 9px; }
.clock { display: flex; flex-direction: column; justify-content: center; align-items: center; width: 54px; }
.notify { width: 26px; }
```
FILE: sheet.js
```js
const widths = [17, 39, 40, 40, 40, 40, 39, 40, 40, 44, 40, 39, 51, 39, 40, 40, 40, 39, 40, 40, 40, 0];
const letters = "ABCDEFGHIJKLMNOPQRSTU".split("");
const main = [
  ["NO.", "名前", "国語", "英語", "数学", "合計"],
  [1, "佐藤", 100, 100, 70, 270],
  [2, "鈴木", 100, 100, 50, 250],
  [3, "高橋", 100, 100, 50, 250],
  [4, "田中", 100, 100, 60, 260],
  [5, "伊藤", "欠", "", 80, 80],
  [6, "渡辺", 100, 100, 50, 250],
  [7, "山本", 100, 100, 60, 260],
  [8, "中村", 100, 100, 67, 267],
  [9, "小林", 100, 100, 79, 279],
  [10, "加藤", 100, 100, 59, 259]
];
const side = {
  H1: "AVERAGE", K1: "AVERAGEA",
  H2: "国語", I2: 100, K2: "国語", L2: 90,
  H3: "英語", I3: 100, K3: "英語", L3: 100
};

function cell(letter, col, row) {
  if (row === 1 && (letter === "I" || letter === "L")) return "";
  const classes = [];
  let value = "";
  let span = "";
  if (col < 6 && row <= main.length) {
    value = main[row - 1][col];
    classes.push("box");
    if (row === 1) {
      return `<td class="box head"><div class="cell">${value}<button aria-label="${value} フィルター"><svg class="chev"><use href="#tri"/></svg></button></div></td>`;
    }
  } else if (letter + row in side) {
    value = side[letter + row];
    classes.push("box");
    if (row === 1) {
      span = ' colspan="2"';
      classes.push(letter === "H" ? "avg" : "avga");
    }
  }
  if (row <= 3 && (letter === "G" || letter === "J")) classes.push("edge");
  if (typeof value === "number") classes.push("num");
  if (letter === "L" && row === 3) classes.push("under");
  if (letter === "L" && row === 4) classes.push("active");
  return `<td class="${classes.join(" ")}"${span}>${value}</td>`;
}

let html = "<colgroup>" + widths.map(w => w ? `<col style="width:${w}px">` : "<col>").join("") + "</colgroup>";
html += '<thead><tr><th><div class="corner"></div></th>' + letters.map(l => `<th class="${l === "L" ? "sel" : ""}">${l}</th>`).join("") + "</tr></thead><tbody>";
for (let row = 1; row <= 29; row++) {
  html += `<tr><th class="${row === 4 ? "sel" : ""}">${row}</th>` + letters.map((l, i) => cell(l, i, row)).join("") + "</tr>";
}
document.getElementById("grid").innerHTML = html + "</tbody>";
```
